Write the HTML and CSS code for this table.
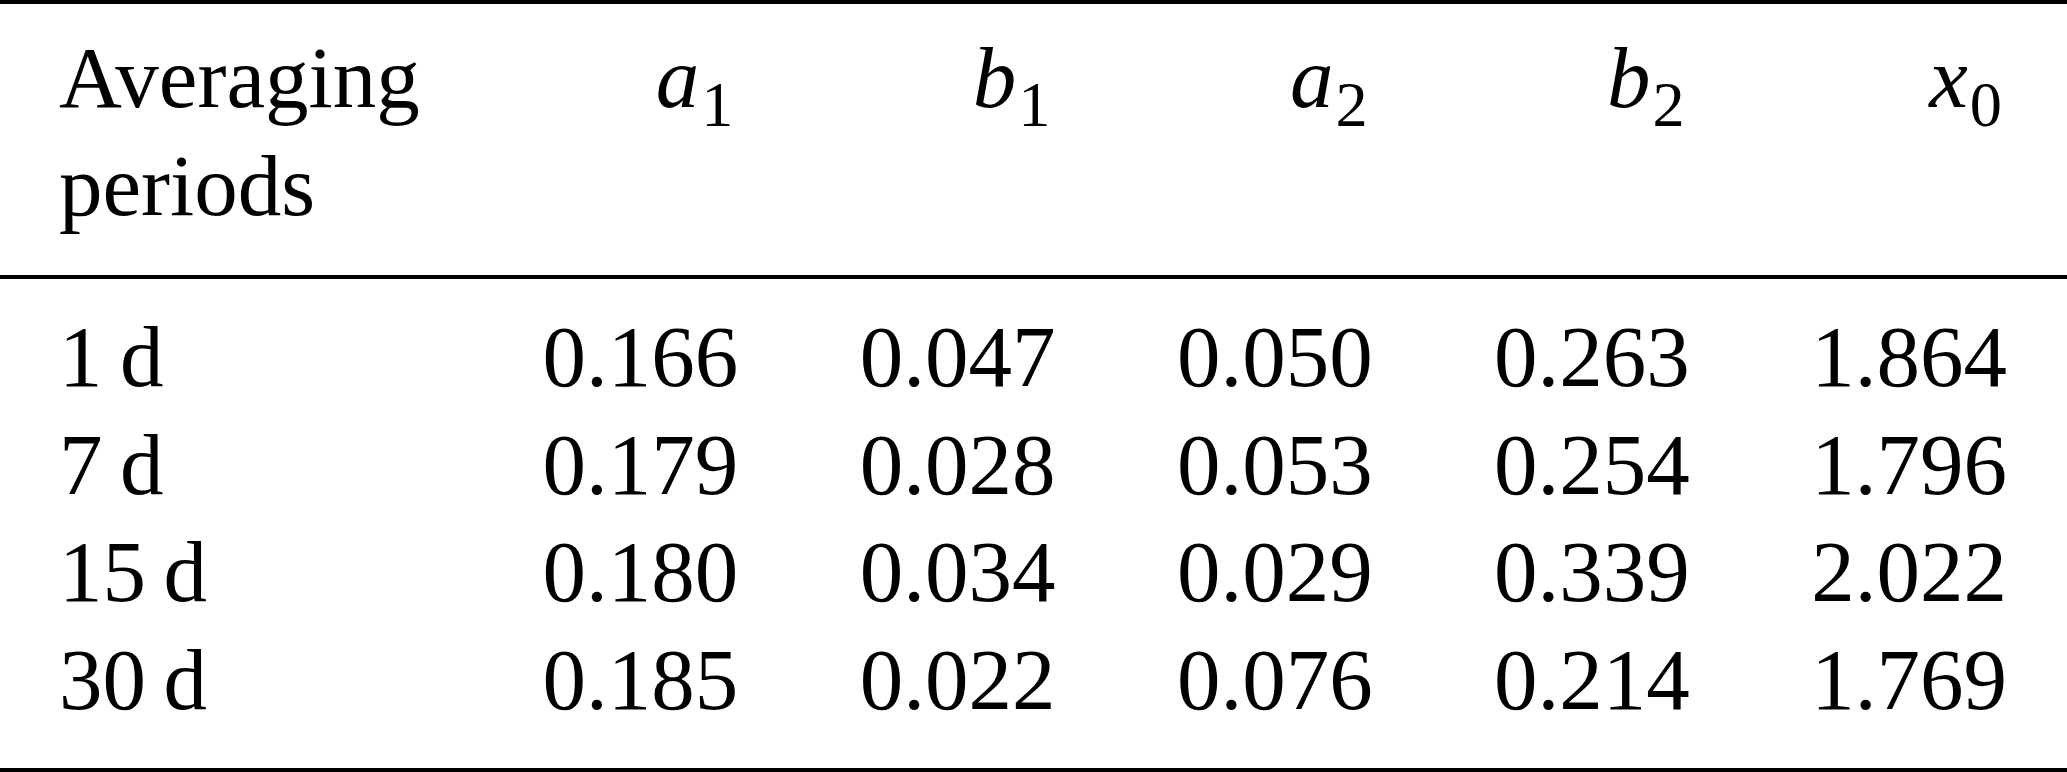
FILE: index.html
```html
<!DOCTYPE html>
<html lang="en">
<head>
    <meta charset="UTF-8">
    <meta name="viewport" content="width=device-width, initial-scale=1.0">
    <title>Fit parameters per averaging period</title>
    <link rel="stylesheet" href="styles.css">
</head>
<body>
    <table class="params">
        <colgroup>
            <col class="col-label">
            <col class="col-num">
            <col class="col-num">
            <col class="col-num">
            <col class="col-num">
            <col class="col-num">
        </colgroup>
        <thead>
            <tr>
                <th class="label">Averaging periods</th>
                <th><i>a</i><sub>1</sub></th>
                <th><i>b</i><sub>1</sub></th>
                <th><i>a</i><sub>2</sub></th>
                <th><i>b</i><sub>2</sub></th>
                <th><i>x</i><sub>0</sub></th>
            </tr>
        </thead>
        <tbody>
            <tr>
                <td class="label">1&thinsp;d</td>
                <td>0.166</td>
                <td>0.047</td>
                <td>0.050</td>
                <td>0.263</td>
                <td>1.864</td>
            </tr>
            <tr>
                <td class="label">7&thinsp;d</td>
                <td>0.179</td>
                <td>0.028</td>
                <td>0.053</td>
                <td>0.254</td>
                <td>1.796</td>
            </tr>
            <tr>
                <td class="label">15&thinsp;d</td>
                <td>0.180</td>
                <td>0.034</td>
                <td>0.029</td>
                <td>0.339</td>
                <td>2.022</td>
            </tr>
            <tr>
                <td class="label">30&thinsp;d</td>
                <td>0.185</td>
                <td>0.022</td>
                <td>0.076</td>
                <td>0.214</td>
                <td>1.769</td>
            </tr>
        </tbody>
    </table>
</body>
</html>
```

FILE: styles.css
```css
* {
    margin: 0;
    padding: 0;
    box-sizing: border-box;
}

body {
    font-family: 'Liberation Serif', 'Times New Roman', serif;
    background: #fff;
    color: #000;
}

.params {
    width: 100%;
    table-layout: fixed;
    border-collapse: collapse;
    font-size: 87px;
    line-height: 107.5px;
    border-top: 4px solid #000;
    border-bottom: 4px solid #000;
}

.col-label {
    width: 481px;
}

.col-num {
    width: 317px;
}

th,
td {
    padding: 0 60px;
    text-align: right;
    font-weight: normal;
    vertical-align: top;
}

.params .label {
    text-align: left;
    padding-left: 59px;
}

thead th {
    padding-top: 20px;
    padding-right: 65px;
    padding-bottom: 36px;
    border-bottom: 4px solid #000;
}

thead th i {
    font-style: italic;
}

thead sub {
    font-size: 0.74em;
    line-height: 0;
    vertical-align: -0.3em;
    margin-left: 2px;
}

tbody tr:first-child td {
    padding-top: 24px;
}

tbody tr:last-child td {
    padding-bottom: 35px;
}
```
